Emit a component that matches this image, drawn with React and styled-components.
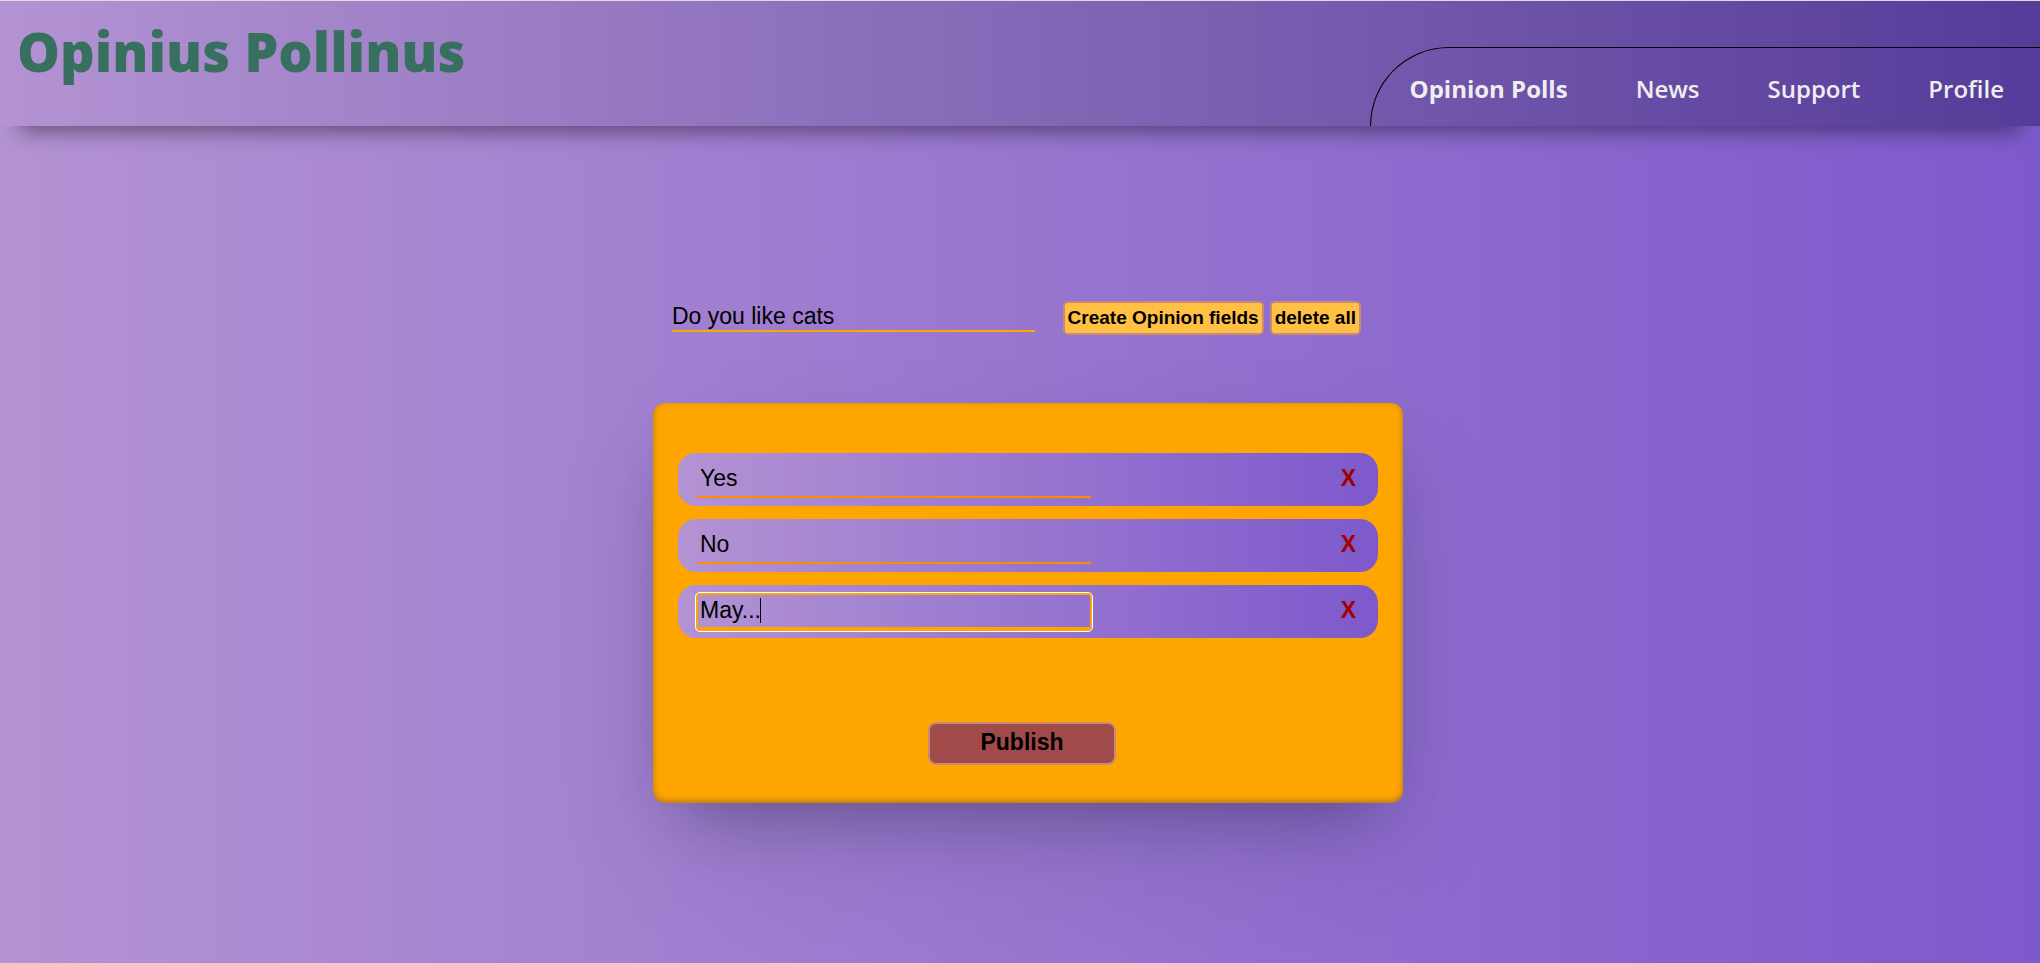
import React, { useState } from "react";
import styled, { createGlobalStyle } from "styled-components";

const lilac = "linear-gradient(90deg, #b393d3, #7d59cc)";

const GlobalStyle = createGlobalStyle`
  * { box-sizing: border-box; }
  body {
    margin: 0;
    font-family: "Liberation Sans", Arial, sans-serif;
    color: #000;
  }
`;

const Page = styled.div`
  min-height: 100vh;
  background: ${lilac};
  border-top: 1px solid #dcdcdc;
`;

const Header = styled.header`
  display: flex;
  justify-content: space-between;
  align-items: flex-end;
  height: 125px;
  background: linear-gradient(to left, #553c9a, #b393d3);
  box-shadow: rgba(0, 0, 0, 0.45) 0 25px 20px -20px;
`;

const Title = styled.h1`
  align-self: flex-start;
  margin: 0;
  padding: 10px 17px;
  font: 800 54px/80px "Open Sans", "Noto Sans", sans-serif;
  color: #38705f;
`;

const Nav = styled.nav`
  display: flex;
  gap: 68px;
  height: 79px;
  padding: 0 36px 0 39px;
  border-top: 1px solid #000;
  border-left: 1px solid #000;
  border-top-left-radius: 80px;
`;

const NavLink = styled.a`
  font: ${(p) => (p.$current ? 700 : 600)} 24px/82px "Open Sans", "Noto Sans", sans-serif;
  color: #eee;
  text-decoration: none;
  white-space: nowrap;
`;

const Main = styled.main`
  display: flex;
  flex-direction: column;
  align-items: center;
  padding: 175px 0 64px;
`;

const QuestionForm = styled.form`
  display: flex;
  align-items: flex-start;
  gap: 6px;
  width: 100%;
  max-width: 696px;
  padding-right: 7px;
`;

const QuestionInput = styled.input`
  flex: 1;
  min-width: 0;
  height: 31px;
  margin-right: 22px;
  padding: 2px 0 0;
  border: 0;
  border-bottom: 2px solid #ffa500;
  background: transparent;
  font: 23px "Liberation Sans", Arial, sans-serif;
  outline: none;
`;

const Button = styled.button`
  border: 2px solid #c98b73;
  font-family: inherit;
  font-weight: 700;
  color: #000;
  cursor: pointer;
`;

const ToolButton = styled(Button)`
  height: 34px;
  padding: 0 3px;
  border-radius: 5px;
  background: #ffc044;
  font-size: 19px;
  white-space: nowrap;
`;

const Card = styled.section`
  width: 100%;
  max-width: 750px;
  margin: 68px 0 0 16px;
  padding: 50px 25px 38px;
  border-radius: 12px;
  background: #ffa500;
  box-shadow: rgba(50, 50, 93, 0.25) 0 50px 100px -20px,
    rgba(0, 0, 0, 0.3) 0 30px 60px -30px,
    rgba(10, 37, 64, 0.35) 0 -2px 6px 0 inset;
`;

const OptionList = styled.ul`
  display: flex;
  flex-direction: column;
  gap: 13px;
  margin: 0;
  padding: 0;
  list-style: none;
`;

const OptionRow = styled.li`
  display: flex;
  justify-content: space-between;
  align-items: center;
  height: 53px;
  padding: 0 18px 0 19px;
  border-radius: 18px;
  background: ${lilac};
`;

const Field = styled.div`
  position: relative;
  flex: 0 1 394px;
`;

const OptionInput = styled.input`
  display: block;
  width: 100%;
  height: 36px;
  padding: 0 3px;
  border: 0;
  border-bottom: 2px solid ${(p) => (p.$active ? "#ffa500" : "#ff8c00")};
  border-radius: ${(p) => (p.$active ? "3px" : "0")};
  background: transparent;
  font: 23px "Liberation Sans", Arial, sans-serif;
  caret-color: transparent;
  outline: ${(p) => (p.$active ? "1px solid #fff" : "none")};
  outline-offset: 1px;
  box-shadow: ${(p) => (p.$active ? "0 0 0 1px #ffa500, inset 0 0 0 1px #ffa500" : "none")};
`;

const Caret = styled.span`
  position: absolute;
  top: 4px;
  left: 63px;
  width: 1px;
  height: 25px;
  background: #000;
`;

const RemoveButton = styled.button`
  padding: 0 4px 2px;
  border: 0;
  background: transparent;
  font: 700 23px "Liberation Sans", Arial, sans-serif;
  color: #a00000;
  cursor: pointer;
`;

const PublishButton = styled(Button)`
  display: block;
  width: 188px;
  height: 43px;
  margin: 84px auto 0;
  padding: 0 0 3px;
  border-radius: 8px;
  background: #a14a4a;
  font-size: 23px;
`;

const PublishBar = styled.div`
  padding-right: 12px;
`;

const links = ["Opinion Polls", "News", "Support", "Profile"];

export default function App() {
  const [question, setQuestion] = useState("Do you like cats");
  const [options, setOptions] = useState(["Yes", "No", "May..."]);
  const active = 2;

  const change = (i, value) => setOptions(options.map((o, n) => (n === i ? value : o)));
  const remove = (i) => setOptions(options.filter((_, n) => n !== i));

  return (
    <>
      <GlobalStyle />
      <Page>
        <Header>
          <Title>Opinius Pollinus</Title>
          <Nav>
            {links.map((label, i) => (
              <NavLink key={label} href="#" $current={i === 0}>
                {label}
              </NavLink>
            ))}
          </Nav>
        </Header>
        <Main>
          <QuestionForm onSubmit={(e) => e.preventDefault()}>
            <QuestionInput
              aria-label="Question"
              value={question}
              onChange={(e) => setQuestion(e.target.value)}
            />
            <ToolButton type="button" onClick={() => setOptions([...options, ""])}>
              Create Opinion fields
            </ToolButton>
            <ToolButton type="button" onClick={() => setOptions([])}>
              delete all
            </ToolButton>
          </QuestionForm>
          <Card>
            <OptionList>
              {options.map((text, i) => (
                <OptionRow key={i}>
                  <Field>
                    <OptionInput
                      aria-label={`Option ${i + 1}`}
                      value={text}
                      $active={i === active}
                      onChange={(e) => change(i, e.target.value)}
                    />
                    {i === active && <Caret />}
                  </Field>
                  <RemoveButton type="button" onClick={() => remove(i)}>
                    X
                  </RemoveButton>
                </OptionRow>
              ))}
            </OptionList>
            <PublishBar>
              <PublishButton type="button">Publish</PublishButton>
            </PublishBar>
          </Card>
        </Main>
      </Page>
    </>
  );
}
